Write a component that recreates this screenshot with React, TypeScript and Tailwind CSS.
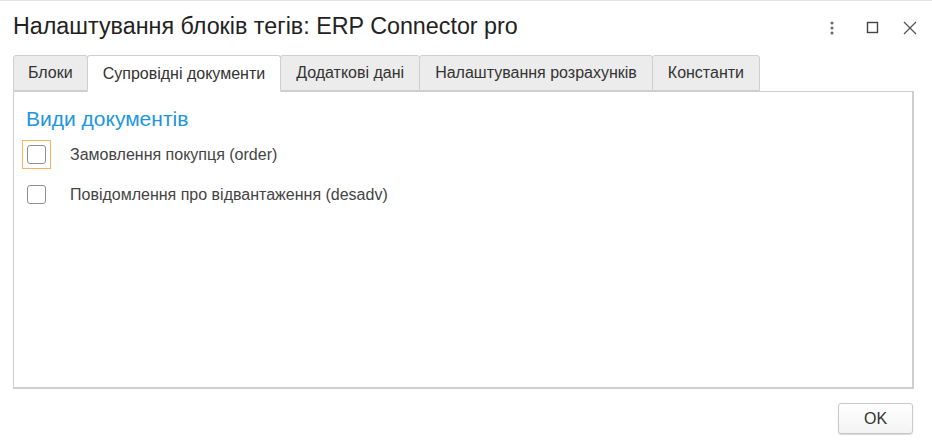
import React, { useState } from 'react';

const tabs = ['Блоки', 'Супровідні документи', 'Додаткові дані', 'Налаштування розрахунків', 'Константи'];

const docs = [
  { label: 'Замовлення покупця (order)', focused: true },
  { label: 'Повідомлення про відвантаження (desadv)', focused: false },
];

function Checkbox({ focused }: { focused: boolean }) {
  return (
    <div
      className={
        focused
          ? 'flex h-[29px] w-[29px] items-center justify-center border border-[#f6b45f]'
          : 'flex h-[29px] w-[29px] items-center justify-center border border-transparent'
      }
    >
      <div className="h-[19px] w-[19px] rounded-[3px] border border-[#8f8f8f] bg-white" />
    </div>
  );
}

export default function App() {
  const [active, setActive] = useState(1);
  const [checked, setChecked] = useState<boolean[]>([false, false]);

  return (
    <div className="flex h-[441px] w-[932px] flex-col border-t border-[#e3e3e3] bg-white font-['Liberation_Sans',Arial,sans-serif] text-[#333]">
      {/* header */}
      <div className="flex h-[54px] items-center pl-[13px] pr-[14px]">
        <h1 className="flex-1 pb-[2px] text-[23.3px] leading-none text-[#222]">Налаштування блоків тегів: ERP Connector pro</h1>
        <div className="flex items-center text-[#555]">
          <svg className="mr-[28px]" width="12" height="14" viewBox="0 0 12 14">
            <circle cx="6" cy="2" r="1.5" fill="#666" />
            <circle cx="6" cy="7" r="1.5" fill="#666" />
            <circle cx="6" cy="12" r="1.5" fill="#666" />
          </svg>
          <svg className="mr-[22px]" width="14" height="14" viewBox="0 0 14 14">
            <rect x="1.5" y="1.5" width="10" height="10" fill="none" stroke="#444" strokeWidth="1.4" />
          </svg>
          <svg width="16" height="16" viewBox="0 0 16 16">
            <path d="M2 2 L14 14 M14 2 L2 14" stroke="#555" strokeWidth="1.3" />
          </svg>
        </div>
      </div>

      {/* tabs */}
      <div className="flex items-end pl-[13px]">
        {tabs.map((t, i) => (
          <button
            key={t}
            type="button"
            onClick={() => setActive(i)}
            className={
              i === active
                ? 'relative -mb-px -ml-px h-[37px] rounded-t-[3px] border border-b-white border-[#cfcfcf] bg-white px-[15px] text-[16px] text-[#333] first:ml-0'
                : '-ml-px h-[36px] rounded-t-[3px] border border-[#cfcfcf] bg-[#ececec] px-[15px] text-[16px] text-[#333] first:ml-0 first:px-[14px]'
            }
          >
            {t}
          </button>
        ))}
      </div>

      {/* panel */}
      <div className="mx-[13px] h-[298px] w-[901px] border border-r-2 border-b-2 border-[#cfcfcf] px-[8px] pt-[14px]">
        <h2 className="pl-[4px] text-[21px] leading-[26px] text-[#2196e0]">Види документів</h2>
        <div className="mt-[8px] flex flex-col gap-[11px]">
          {docs.map((d, i) => (
            <label key={d.label} className="flex cursor-pointer items-center">
              <input
                type="checkbox"
                className="hidden"
                checked={checked[i]}
                onChange={() => setChecked(checked.map((c, j) => (j === i ? !c : c)))}
              />
              <Checkbox focused={d.focused} />
              <span className="ml-[19px] text-[16px] text-[#444]">{d.label}</span>
            </label>
          ))}
        </div>
      </div>

      {/* footer */}
      <div className="flex justify-end pr-[19px] pt-[14px]">
        <button
          type="button"
          className="h-[31px] w-[75px] rounded-[3px] border border-[#c8c8c8] bg-gradient-to-b from-white to-[#f3f3f3] text-[16px] text-[#333] shadow-[0_1px_1px_rgba(0,0,0,0.15)]"
        >
          OK
        </button>
      </div>
    </div>
  );
}
